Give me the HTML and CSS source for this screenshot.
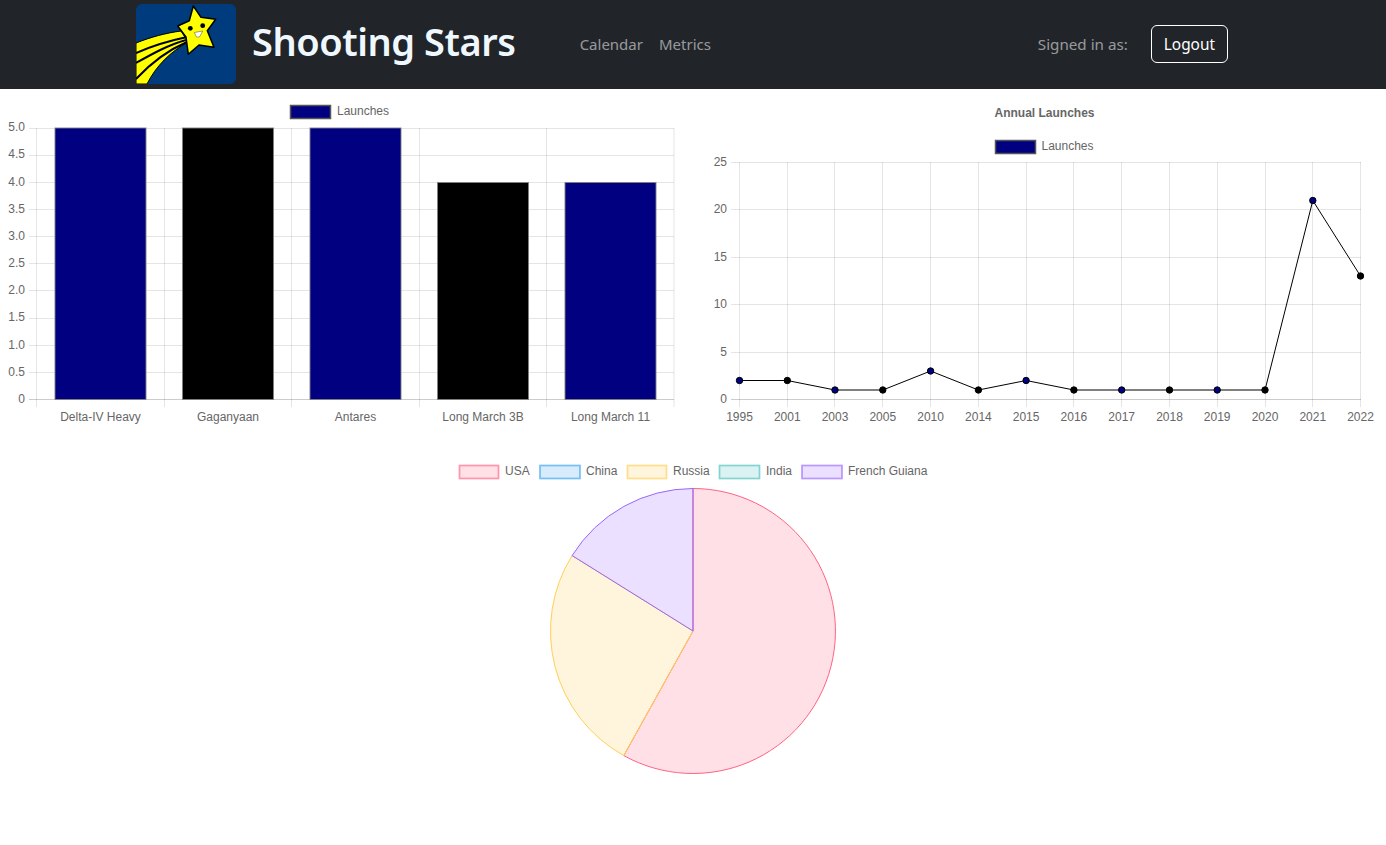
FILE: index.html
```html
<html>

<head>
    <meta http-equiv="Content-Type" content="text/html" charset="utf-8">
    <title>Shooting Stars</title>
    <link rel="stylesheet" href="styles.css">
</head>

<body>
    <nav class="navbar">
        <a class="brand" href="#">
            <svg class="logo" viewBox="0 0 100 80" width="100" height="80">
                <rect width="100" height="80" rx="6" fill="#003b7d"/>
                <path d="M0 39 C15 33 30 29 45 27 L52 38 C34 48 20 62 11 80 L0 80 Z" fill="#ffff00" stroke="#000" stroke-width="1"/>
                <path d="M0 49 C16 42 32 37 49 33.5 M0 59 C16 50 32 41 50 36 M0 75 C14 60 30 47 51 38" fill="none" stroke="#000" stroke-width="2"/>
                <path d="M57.3 2 L65 13.3 L79.7 15.3 L71.3 26.7 L78 43.3 L63 41 L52.3 50.3 L50 33 L41.7 22 L53.3 16.7 Z" fill="#ffff00" stroke="#000" stroke-width="1.5" stroke-linejoin="round"/>
                <circle cx="54.3" cy="24.3" r="2.4" fill="#000"/>
                <circle cx="66.7" cy="21.7" r="2.4" fill="#000"/>
                <path d="M58.3 28.5 L66.7 27 L63.5 33 L60.5 33 Z" fill="#fff" stroke="#444" stroke-width=".5"/>
            </svg>
            <span class="brand-name">Shooting Stars</span>
        </a>
        <div class="nav-links">
            <a href="#">Calendar</a>
            <a href="#">Metrics</a>
        </div>
        <div class="nav-user">
            <span>Signed in as:</span>
            <button class="logout">Logout</button>
        </div>
    </nav>

    <div class="charts">
        <!-- viewBox uses page coordinates so the numbers line up with the plot -->
        <svg class="chart" viewBox="0 89 693 361" width="693" height="361">
            <rect class="swatch" x="290.5" y="105.5" width="40" height="13" fill="#000080"/>
            <text x="337" y="115">Launches</text>

            <path class="grid" d="M29 128.5H674M29 155.5H674M29 182.5H674M29 209.5H674M29 236.5H674M29 263.5H674M29 290.5H674M29 318.5H674M29 345.5H674M29 372.5H674"/>
            <path class="grid" d="M36.5 128V407M164.5 128V407M291.5 128V407M419.5 128V407M546.5 128V407M674 128V407"/>
            <path class="axis" d="M29 399.5H674"/>

            <g class="y-labels">
                <text x="25" y="131">5.0</text>
                <text x="25" y="158">4.5</text>
                <text x="25" y="186">4.0</text>
                <text x="25" y="213">3.5</text>
                <text x="25" y="240">3.0</text>
                <text x="25" y="267">2.5</text>
                <text x="25" y="294">2.0</text>
                <text x="25" y="321">1.5</text>
                <text x="25" y="349">1.0</text>
                <text x="25" y="376">0.5</text>
                <text x="25" y="403">0</text>
            </g>

            <rect class="bar" x="55" y="128" width="91" height="271.5" fill="#000080"/>
            <rect class="bar" x="182.5" y="128" width="91" height="271.5" fill="#000"/>
            <rect class="bar" x="310" y="128" width="91" height="271.5" fill="#000080"/>
            <rect class="bar" x="437.5" y="182.5" width="91" height="217" fill="#000"/>
            <rect class="bar" x="565" y="182.5" width="91" height="217" fill="#000080"/>

            <g class="x-labels">
                <text x="100.5" y="421">Delta-IV Heavy</text>
                <text x="228" y="421">Gaganyaan</text>
                <text x="355.5" y="421">Antares</text>
                <text x="483" y="421">Long March 3B</text>
                <text x="610.5" y="421">Long March 11</text>
            </g>
        </svg>

        <svg class="chart" viewBox="693 89 693 361" width="693" height="361">
            <text class="chart-title" x="1044.5" y="117">Annual Launches</text>
            <rect class="swatch" x="995.5" y="140.5" width="40" height="13" fill="#000080"/>
            <text x="1041.5" y="150">Launches</text>

            <path class="grid" d="M731 162.5H1361M731 209.5H1361M731 257.5H1361M731 304.5H1361M731 352.5H1361"/>
            <path class="grid" d="M739.5 162V407M787.5 162V407M834.5 162V407M882.5 162V407M930.5 162V407M978.5 162V407M1026.5 162V407M1073.5 162V407M1121.5 162V407M1169.5 162V407M1217.5 162V407M1265.5 162V407M1312.5 162V407M1360.5 162V407"/>
            <path class="axis" d="M731 399.5H1361"/>

            <g class="y-labels">
                <text x="727" y="166">25</text>
                <text x="727" y="213">20</text>
                <text x="727" y="261">15</text>
                <text x="727" y="308">10</text>
                <text x="727" y="356">5</text>
                <text x="727" y="403">0</text>
            </g>

            <polyline class="trend" points="739.5,380.5 787.3,380.5 835,390 882.8,390 930.6,371 978.4,390 1026.1,380.5 1073.9,390 1121.7,390 1169.5,390 1217.2,390 1265,390 1312.8,200.5 1360.5,276"/>

            <g class="points">
                <circle cx="739.5" cy="380.5" r="3.2" fill="#000080"/>
                <circle cx="787.3" cy="380.5" r="3.2" fill="#000"/>
                <circle cx="835" cy="390" r="3.2" fill="#000080"/>
                <circle cx="882.8" cy="390" r="3.2" fill="#000"/>
                <circle cx="930.6" cy="371" r="3.2" fill="#000080"/>
                <circle cx="978.4" cy="390" r="3.2" fill="#000"/>
                <circle cx="1026.1" cy="380.5" r="3.2" fill="#000080"/>
                <circle cx="1073.9" cy="390" r="3.2" fill="#000"/>
                <circle cx="1121.7" cy="390" r="3.2" fill="#000080"/>
                <circle cx="1169.5" cy="390" r="3.2" fill="#000"/>
                <circle cx="1217.2" cy="390" r="3.2" fill="#000080"/>
                <circle cx="1265" cy="390" r="3.2" fill="#000"/>
                <circle cx="1312.8" cy="200.5" r="3.2" fill="#000080"/>
                <circle cx="1360.5" cy="276" r="3.2" fill="#000"/>
            </g>

            <g class="x-labels">
                <text x="739.5" y="421">1995</text>
                <text x="787.3" y="421">2001</text>
                <text x="835" y="421">2003</text>
                <text x="882.8" y="421">2005</text>
                <text x="930.6" y="421">2010</text>
                <text x="978.4" y="421">2014</text>
                <text x="1026.1" y="421">2015</text>
                <text x="1073.9" y="421">2016</text>
                <text x="1121.7" y="421">2017</text>
                <text x="1169.5" y="421">2018</text>
                <text x="1217.2" y="421">2019</text>
                <text x="1265" y="421">2020</text>
                <text x="1312.8" y="421">2021</text>
                <text x="1360.5" y="421">2022</text>
            </g>
        </svg>
    </div>

    <div class="pie-row">
        <svg class="chart" viewBox="347 450 693 340" width="693" height="340">
            <rect class="usa" x="459.5" y="465.5" width="39" height="13"/>
            <text x="505" y="475">USA</text>
            <rect class="china" x="540" y="465.5" width="40" height="13"/>
            <text x="586" y="475">China</text>
            <rect class="russia" x="627.5" y="465.5" width="39" height="13"/>
            <text x="673" y="475">Russia</text>
            <rect class="india" x="719.5" y="465.5" width="40" height="13"/>
            <text x="766" y="475">India</text>
            <rect class="guiana" x="802" y="465.5" width="40" height="13"/>
            <text x="848" y="475">French Guiana</text>

            <path class="usa" d="M693 631 V488.5 A142.5 142.5 0 1 1 623.8 755.6 Z"/>
            <path class="russia" d="M693 631 L623.8 755.6 A142.5 142.5 0 0 1 572.1 555.6 Z"/>
            <path class="guiana" d="M693 631 L572.1 555.6 A142.5 142.5 0 0 1 693 488.5 Z"/>
        </svg>
    </div>
</body>

</html>
```

FILE: styles.css
```css
body {
    margin: 0;
    background-color: #fff;
}

.navbar {
    display: flex;
    align-items: center;
    box-sizing: border-box;
    height: 89px;
    padding: 0 158px 1px 136px;
    background-color: #212529;
    font-family: "Noto Sans", "Open Sans", sans-serif;
}

.brand {
    display: flex;
    align-items: center;
    gap: 16px;
    color: #f0f8ff;
    text-decoration: none;
}

.logo {
    display: block;
}

.brand-name {
    padding-bottom: 6px;
    font-size: 38px;
    font-weight: 600;
    letter-spacing: -0.45px;
}

.nav-links {
    display: flex;
    gap: 16px;
    margin-left: 64px;
}

.nav-links a {
    color: rgba(255, 255, 255, 0.55);
    font-size: 15px;
    text-decoration: none;
}

.nav-user {
    display: flex;
    align-items: center;
    gap: 23px;
    margin-left: auto;
    color: rgba(255, 255, 255, 0.55);
    font-size: 15.2px;
}

.logout {
    height: 38px;
    padding: 0 12px;
    color: #fff;
    background-color: transparent;
    border: 1px solid #fff;
    border-radius: 6px;
    font-family: inherit;
    font-size: 15.4px;
}

.charts {
    display: grid;
    grid-template-columns: 1fr 1fr;
}

.pie-row {
    display: flex;
    justify-content: center;
}

.chart {
    display: block;
    font-family: "Liberation Sans", Arial, sans-serif;
    font-size: 12px;
    fill: #666;
}

.chart-title {
    font-weight: bold;
    text-anchor: middle;
}

.swatch {
    stroke: #555;
    stroke-width: 1.5;
}

.grid {
    fill: none;
    stroke: rgba(0, 0, 0, 0.1);
    stroke-width: 1;
}

.axis {
    fill: none;
    stroke: rgba(0, 0, 0, 0.2);
    stroke-width: 1;
}

.y-labels text {
    text-anchor: end;
}

.x-labels text {
    text-anchor: middle;
}

.bar {
    stroke: rgba(128, 128, 128, 0.9);
    stroke-width: 1;
}

.trend {
    fill: none;
    stroke: #000;
    stroke-width: 1;
}

.points circle {
    stroke: #000;
    stroke-width: 1;
}

.usa {
    fill: rgba(255, 99, 132, 0.2);
    stroke: #ff6384;
}

.china {
    fill: rgba(54, 162, 235, 0.2);
    stroke: #36a2eb;
}

.russia {
    fill: rgba(255, 206, 86, 0.2);
    stroke: #ffce56;
}

.india {
    fill: rgba(75, 192, 192, 0.2);
    stroke: #4bc0c0;
}

.guiana {
    fill: rgba(153, 102, 255, 0.2);
    stroke: #9966ff;
}

rect.usa, rect.china, rect.russia, rect.india, rect.guiana {
    stroke-opacity: 0.65;
    stroke-width: 1.7;
}
```
